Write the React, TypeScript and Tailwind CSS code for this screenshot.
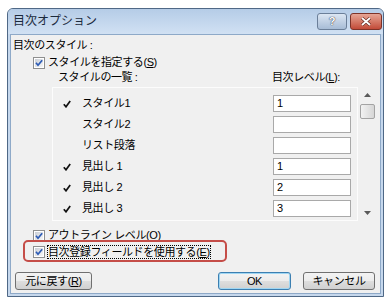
import React from "react";

const CheckBox = () => (
  <svg width="12" height="12" viewBox="0 0 12 12" className="shrink-0">
    <defs>
      <linearGradient id="cbg" x1="0" y1="0" x2="1" y2="1">
        <stop offset="0" stopColor="#c9ced6" />
        <stop offset="1" stopColor="#f7f7f7" />
      </linearGradient>
    </defs>
    <rect x="0.5" y="0.5" width="11" height="11" fill="#ffffff" stroke="#8e8f8f" />
    <rect x="2" y="2" width="8" height="8" fill="url(#cbg)" />
    <path d="M3 5.8 L5 8.2 L9.2 3.2" stroke="#2c5bb5" strokeWidth="1.7" fill="none" />
  </svg>
);

const ListCheck = () => (
  <svg width="8" height="8" viewBox="0 0 8 8" className="shrink-0">
    <path d="M0.8 4.2 L3 6.8 L7.2 1" stroke="#111" strokeWidth="1.7" fill="none" />
  </svg>
);

const items = [
  { label: "スタイル1", checked: true, level: "1" },
  { label: "スタイル2", checked: false, level: "" },
  { label: "リスト段落", checked: false, level: "" },
  { label: "見出し 1", checked: true, level: "1" },
  { label: "見出し 2", checked: true, level: "2" },
  { label: "見出し 3", checked: true, level: "3" },
];

const btn =
  "h-[18px] rounded-[3px] border text-[11px] leading-none flex items-center justify-center bg-[linear-gradient(#f3f3f3,#ececec_50%,#dedede_51%,#d0d0d0)] text-black";

export default function App() {
  return (
    <div className="w-[388px] h-[304px] bg-white pt-[8px] pl-[7px] font-['Liberation_Sans','Noto_Sans_CJK_JP',sans-serif] text-[11px] tracking-[-0.4px] text-black">
      <div className="w-[377px] h-[289px] rounded-t-[6px] border border-[#4f6886] bg-[#c6d8ed] flex flex-col">
        {/* title bar */}
        <div className="h-[25px] flex items-start rounded-t-[5px] bg-linear-to-b from-[#b5cce7] to-[#d1e1f3]">
          <div className="pl-[5px] pt-[5px] text-[12px] leading-[14px] tracking-normal text-[#1b2a3c]">目次オプション</div>
          <div className="ml-auto mt-[4px] mr-[1px] flex gap-[3px]">
            <div className="w-[30px] h-[17px] rounded-[3px] border border-[#6b7f99] bg-linear-to-b from-[#dbe6f3] to-[#a7bcd6] flex items-center justify-center text-[11px] font-bold text-white leading-none [text-shadow:0_0_1px_#334,0_0_1px_#334]">
              ?
            </div>
            <div className="w-[32px] h-[17px] rounded-[3px] border border-[#7e3328] bg-linear-to-b from-[#e6a595] to-[#c24a38] flex items-center justify-center">
              <svg width="12" height="9" viewBox="0 0 12 9">
                <path d="M2 1 L10 8 M10 1 L2 8" stroke="#5a2018" strokeWidth="3" />
                <path d="M2 1 L10 8 M10 1 L2 8" stroke="#ffffff" strokeWidth="1.8" />
              </svg>
            </div>
          </div>
        </div>
        {/* content */}
        <div className="relative flex-1 mx-[2px] mb-[2px] border border-[#8ea9c8] bg-[#f0f0f0] flex flex-col">
          <div className="mt-[3px] ml-[2px] h-[14px] flex items-center">目次のスタイル :</div>
          <div className="mt-[4px] ml-[22px] h-[13px] flex items-center gap-[3px]">
            <CheckBox />
            <span>
              スタイルを指定する(<span className="underline">S</span>)
            </span>
          </div>
          <div className="mt-[2px] h-[13px] flex items-center">
            <span className="ml-[47px] w-[214px]">スタイルの一覧 :</span>
            <span>
              目次レベル(<span className="underline">L</span>):
            </span>
          </div>
          <div className="mt-[3px] ml-[41px] mr-[2px] h-[134px] flex">
            <div className="w-[306px] h-full border border-[#fcfcfc] pt-[7px] flex flex-col gap-[4px]">
              {items.map((it) => (
                <div key={it.label} className="h-[17px] flex items-center">
                  <div className="w-[29px] pl-[10px] flex items-center">{it.checked && <ListCheck />}</div>
                  <div className="flex-1">{it.label}</div>
                  <div className="w-[78px] h-[17px] mr-[6px] border border-[#a9a9a9] bg-white pl-[3px] flex items-center">
                    {it.level}
                  </div>
                </div>
              ))}
            </div>
            <div className="w-[19px] h-full flex flex-col items-center pt-[6px] pb-[6px]">
              <svg width="7" height="4" viewBox="0 0 7 4">
                <path d="M0 4 L3.5 0 L7 4 Z" fill="#5a5a5a" />
              </svg>
              <div className="mt-[7px] w-[15px] h-[15px] border border-[#a3a3a3] rounded-[2px] bg-linear-to-r from-[#f2f2f2] to-[#d6d6d6]" />
              <div className="flex-1" />
              <svg width="7" height="4" viewBox="0 0 7 4">
                <path d="M0 0 L7 0 L3.5 4 Z" fill="#5a5a5a" />
              </svg>
            </div>
          </div>
          <div className="mt-[8px] ml-[22px] h-[13px] flex items-center gap-[3px]">
            <CheckBox />
            <span>
              アウトライン レベル(<span className="underline">O</span>)
            </span>
          </div>
          <div className="mt-[3px] ml-[22px] h-[13px] flex items-center gap-[3px]">
            <CheckBox />
            <span className="outline-1 outline-dotted outline-black leading-[12px]">
              目次登録フィールドを使用する(<span className="underline">E</span>)
            </span>
          </div>
          <div className="mt-[14px] flex items-center">
            <div className={`${btn} ml-[4px] w-[77px] border-[#707070]`}>
              元に戻す(<span className="underline">R</span>)
            </div>
            <div className={`${btn} ml-auto w-[73px] border-[#3c7fb1] shadow-[inset_0_0_0_1px_#9fd6f3]`}>OK</div>
            <div className={`${btn} ml-[12px] mr-[5px] w-[72px] border-[#707070]`}>キャンセル</div>
          </div>
          {/* annotation */}
          <div className="absolute left-[12px] top-[205px] w-[204px] h-[22px] rounded-[5px] border-2 border-[#c54d48] pointer-events-none" />
        </div>
      </div>
    </div>
  );
}
